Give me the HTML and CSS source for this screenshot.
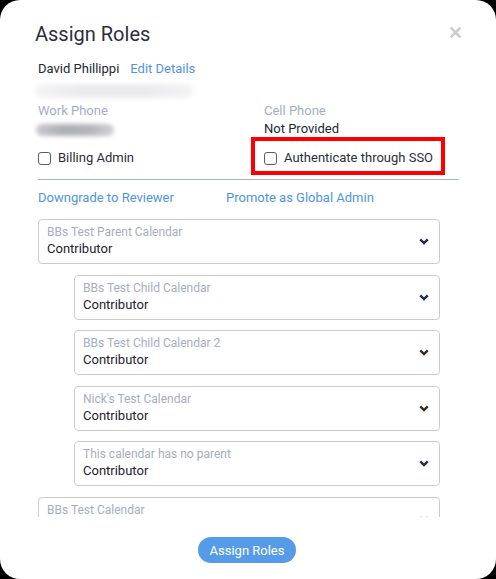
FILE: index.html
```html
<!DOCTYPE html>
<html lang="en">
<head>
<meta charset="utf-8">
<title>Assign Roles</title>
<link rel="stylesheet" href="styles.css">
</head>
<body>
<div class="modal">
  <div class="header">
    <h1 class="title">Assign Roles</h1>
    <svg class="close" width="11" height="11" viewBox="0 0 11 11"><path d="M1.5 1.5 L9.5 9.5 M9.5 1.5 L1.5 9.5" stroke="#cdcdcd" stroke-width="2.6" stroke-linecap="square"/></svg>
  </div>
  <div class="info">
    <div class="name-row"><span class="name">David Phillippi</span><a class="link">Edit Details</a></div>
    <div class="blur blur-email"></div>
    <div class="phones">
      <div class="col">
        <div class="label">Work Phone</div>
        <div class="blur blur-phone"></div>
      </div>
      <div class="col">
        <div class="label">Cell Phone</div>
        <div class="value">Not Provided</div>
      </div>
    </div>
    <div class="checks">
      <label class="check"><span class="box"></span>Billing Admin</label>
      <label class="check sso"><span class="box"></span>Authenticate through SSO</label>
    </div>
  </div>
  <div class="sep"></div>
  <div class="links">
    <a class="link first">Downgrade to Reviewer</a>
    <a class="link">Promote as Global Admin</a>
  </div>
  <div class="scroll">
    <div class="select"><div class="sel-text"><div class="sel-label">BBs Test Parent Calendar</div><div class="sel-value">Contributor</div></div><svg class="chev" width="10" height="7" viewBox="0 0 10 7"><path d="M1.3 1.3 L5 5 L8.7 1.3" fill="none" stroke="#1e2b4a" stroke-width="2.4"/></svg></div>
    <div class="select child"><div class="sel-text"><div class="sel-label">BBs Test Child Calendar</div><div class="sel-value">Contributor</div></div><svg class="chev" width="10" height="7" viewBox="0 0 10 7"><path d="M1.3 1.3 L5 5 L8.7 1.3" fill="none" stroke="#1e2b4a" stroke-width="2.4"/></svg></div>
    <div class="select child"><div class="sel-text"><div class="sel-label">BBs Test Child Calendar 2</div><div class="sel-value">Contributor</div></div><svg class="chev" width="10" height="7" viewBox="0 0 10 7"><path d="M1.3 1.3 L5 5 L8.7 1.3" fill="none" stroke="#3a2a22" stroke-width="2.4"/></svg></div>
    <div class="select child"><div class="sel-text"><div class="sel-label">Nick's Test Calendar</div><div class="sel-value">Contributor</div></div><svg class="chev" width="10" height="7" viewBox="0 0 10 7"><path d="M1.3 1.3 L5 5 L8.7 1.3" fill="none" stroke="#3a2a22" stroke-width="2.4"/></svg></div>
    <div class="select child"><div class="sel-text"><div class="sel-label">This calendar has no parent</div><div class="sel-value">Contributor</div></div><svg class="chev" width="10" height="7" viewBox="0 0 10 7"><path d="M1.3 1.3 L5 5 L8.7 1.3" fill="none" stroke="#1e2b4a" stroke-width="2.4"/></svg></div>
    <div class="select"><div class="sel-text"><div class="sel-label">BBs Test Calendar</div><div class="sel-value">Contributor</div></div><svg class="chev" width="10" height="7" viewBox="0 0 10 7"><path d="M1.3 1.3 L5 5 L8.7 1.3" fill="none" stroke="#1e2b4a" stroke-width="2.4"/></svg></div>
  </div>
  <div class="footer">
    <button class="btn">Assign Roles</button>
  </div>
</div>
</body>
</html>
```

FILE: styles.css
```css
html, body {
  margin: 0;
  padding: 0;
  background: #000;
}
body {
  font-family: Roboto, "Liberation Sans", sans-serif;
  color: #222834;
}
.modal {
  width: 496px;
  height: 579px;
  box-sizing: border-box;
  background: #fff;
  border-radius: 20px;
  padding-top: 22px;
  overflow: hidden;
}
.header {
  display: flex;
  justify-content: space-between;
  align-items: center;
  padding: 0 35px 0 35px;
}
.title {
  margin: 0;
  font-size: 20px;
  line-height: 24px;
  font-weight: 400;
  color: #2c2f3a;
}
.close {
  display: block;
  margin-bottom: 3px;
}
.info {
  padding-left: 38px;
  padding-right: 37px;
}
.name-row {
  margin-top: 15px;
  font-size: 13px;
  line-height: 16px;
  display: flex;
  gap: 11px;
}
.name { color: #222834; }
.link {
  color: #4f94e4;
  font-size: 13px;
  line-height: 16px;
  cursor: pointer;
}
.blur {
  filter: blur(2px);
  border-radius: 6px;
}
.blur-email {
  margin-top: 7px;
  margin-left: -3px;
  width: 158px;
  height: 14px;
  background: linear-gradient(90deg, #f4f4f5, #ebebee 30%, #ebebee 70%, #f4f4f5);
}
.blur-phone {
  margin-top: 5px;
  margin-left: -2px;
  width: 78px;
  height: 12px;
  background: linear-gradient(90deg, #c9c9ce, #aeaeb6 35%, #b4b4bb 70%, #d2d2d6);
}
.phones {
  display: grid;
  grid-template-columns: 226px 1fr;
  margin-top: 5px;
  font-size: 13px;
}
.label {
  line-height: 16px;
  color: #a4aec3;
}
.value {
  margin-top: 2px;
  line-height: 16px;
  color: #222834;
}
.checks {
  display: grid;
  grid-template-columns: 226px 1fr;
  margin-top: 13px;
  font-size: 13px;
  line-height: 16px;
}
.check {
  display: flex;
  align-items: center;
  gap: 7px;
  color: #2a2f3b;
}
.box {
  width: 13px;
  height: 13px;
  box-sizing: border-box;
  border: 1.3px solid #5a5d66;
  border-radius: 3px;
  background: #fff;
}
.sso {
  position: relative;
}
.sso::after {
  content: "";
  position: absolute;
  left: -13px;
  top: -13px;
  width: 194px;
  height: 38px;
  box-sizing: border-box;
  border: 4px solid #ff0000;
}
.sep {
  margin: 13px 37px 0 38px;
  border-top: 1px solid #a8b6cc;
}
.links {
  margin-top: 10px;
  padding-left: 38px;
  display: grid;
  grid-template-columns: 188px 1fr;
}
.scroll {
  margin-top: 13px;
  height: 298px;
  overflow: hidden;
  padding: 0 56px 0 38px;
  display: flex;
  flex-direction: column;
  gap: 10.5px;
}
.select {
  flex: none;
  height: 45px;
  box-sizing: border-box;
  border: 1px solid #cccccc;
  border-radius: 4px;
  padding: 5px 10px 0 8px;
  display: flex;
  align-items: flex-start;
  justify-content: space-between;
}
.select.child {
  margin-left: 36px;
}
.sel-label {
  font-size: 12px;
  line-height: 15px;
  color: #a4aec3;
}
.sel-value {
  margin-top: 1px;
  font-size: 13px;
  line-height: 16px;
  color: #1d2230;
}
.chev {
  display: block;
  margin-top: 13px;
}
.footer {
  display: flex;
  justify-content: center;
  padding-top: 20px;
  padding-right: 2px;
}
.btn {
  font-family: Roboto, "Liberation Sans", sans-serif;
  width: 98px;
  height: 26px;
  border: none;
  border-radius: 13px;
  background: #569be8;
  color: #fff;
  font-size: 13px;
  padding: 0;
}
```
